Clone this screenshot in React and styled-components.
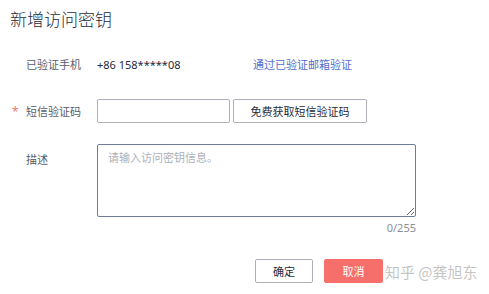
import styled, { createGlobalStyle } from "styled-components";

const Global = createGlobalStyle`
	body {
		margin: 0;
		background: #ffffff;
		font-family: "Noto Sans", "Noto Sans CJK SC", sans-serif;
	}
`;

const Dialog = styled.div`
	position: relative;
	width: 489px;
	height: 294px;
	overflow: hidden;
	background: #ffffff;
`;

const Title = styled.h1`
	margin: 0;
	padding: 7px 0 0 10px;
	font-family: "Noto Sans CJK SC", sans-serif;
	font-size: 17px;
	line-height: 24px;
	font-weight: 300;
	color: #252b3a;
`;

const Form = styled.div`
	display: grid;
	grid-template-columns: 97px 319px;
	margin-top: 21px;
`;

const Label = styled.div`
	display: flex;
	align-items: center;
	align-self: ${(p) => (p.$top ? "start" : "center")};
	height: 24px;
	margin-top: ${(p) => p.$mt || 0}px;
	padding-left: 12px;
	font-size: 11px;
	color: #575d6c;
`;

const Star = styled.span`
	width: 14px;
	color: #eb7a7a;
	font-size: 12px;
	visibility: ${(p) => (p.$show ? "visible" : "hidden")};
`;

const Cell = styled.div`
	display: flex;
	align-items: center;
	gap: ${(p) => p.$gap || 0}px;
	margin-top: ${(p) => p.$mt || 0}px;
	min-height: 24px;
	font-size: 11px;
	color: #252b3a;
`;

const Phone = styled.span`
	width: 156px;
`;

const Link = styled.a`
	color: #526ecc;
	text-decoration: none;
	cursor: pointer;
`;

const Input = styled.input`
	box-sizing: border-box;
	width: 133px;
	height: 24px;
	border: 1px solid #adb0b8;
	border-radius: 2px;
	outline: none;
	padding: 0 6px;
`;

const Button = styled.button`
	box-sizing: border-box;
	width: ${(p) => p.$w}px;
	height: 24px;
	border: 1px solid ${(p) => (p.$primary ? "#f66f6a" : "#adb0b8")};
	border-radius: 2px;
	background: ${(p) => (p.$primary ? "#f66f6a" : "#ffffff")};
	color: ${(p) => (p.$primary ? "#ffffff" : "#252b3a")};
	font-family: "Noto Sans CJK SC", sans-serif;
	font-size: 11px;
	padding: 0;
	cursor: pointer;
`;

const TextWrap = styled.div`
	display: flex;
	flex-direction: column;
	align-items: flex-end;
	margin-top: 21px;
`;

const TextArea = styled.textarea`
	box-sizing: border-box;
	width: 319px;
	height: 73px;
	border: 1px solid #6e7b99;
	border-radius: 2px;
	padding: 4px 10px;
	font-family: "Noto Sans CJK SC", sans-serif;
	font-size: 11px;
	line-height: 16px;
	outline: none;
	resize: vertical;
	&::placeholder {
		color: #adb0b8;
	}
`;

const Counter = styled.div`
	margin-top: 2px;
	font-size: 11px;
	line-height: 18px;
	color: #8a8e99;
`;

const Footer = styled.div`
	display: flex;
	gap: 11px;
	padding-left: 255px;
	margin-top: 22px;
`;

const Watermark = styled.div`
	position: absolute;
	left: 385px;
	top: 262px;
	font-family: "Noto Sans CJK SC", sans-serif;
	font-size: 15px;
	line-height: 20px;
	color: rgba(170, 170, 170, 0.7);
	white-space: nowrap;
`;

const App = () => {
	return (
		<Dialog>
			<Global />
			<Title>新增访问密钥</Title>
			<Form>
				<Label>
					<Star>*</Star>已验证手机
				</Label>
				<Cell>
					<Phone>+86 158*****08</Phone>
					<Link>通过已验证邮箱验证</Link>
				</Cell>

				<Label $mt={23}>
					<Star $show>*</Star>短信验证码
				</Label>
				<Cell $gap={3} $mt={23}>
					<Input />
					<Button $w={134}>免费获取短信验证码</Button>
				</Cell>

				<Label $top $mt={24}>
					<Star>*</Star>描述
				</Label>
				<TextWrap>
					<TextArea placeholder="请输入访问密钥信息。" />
					<Counter>0/255</Counter>
				</TextWrap>
			</Form>
			<Footer>
				<Button $w={58}>确定</Button>
				<Button $w={59} $primary>
					取消
				</Button>
			</Footer>
			<Watermark>知乎 @龚旭东</Watermark>
		</Dialog>
	);
};

export default App;
